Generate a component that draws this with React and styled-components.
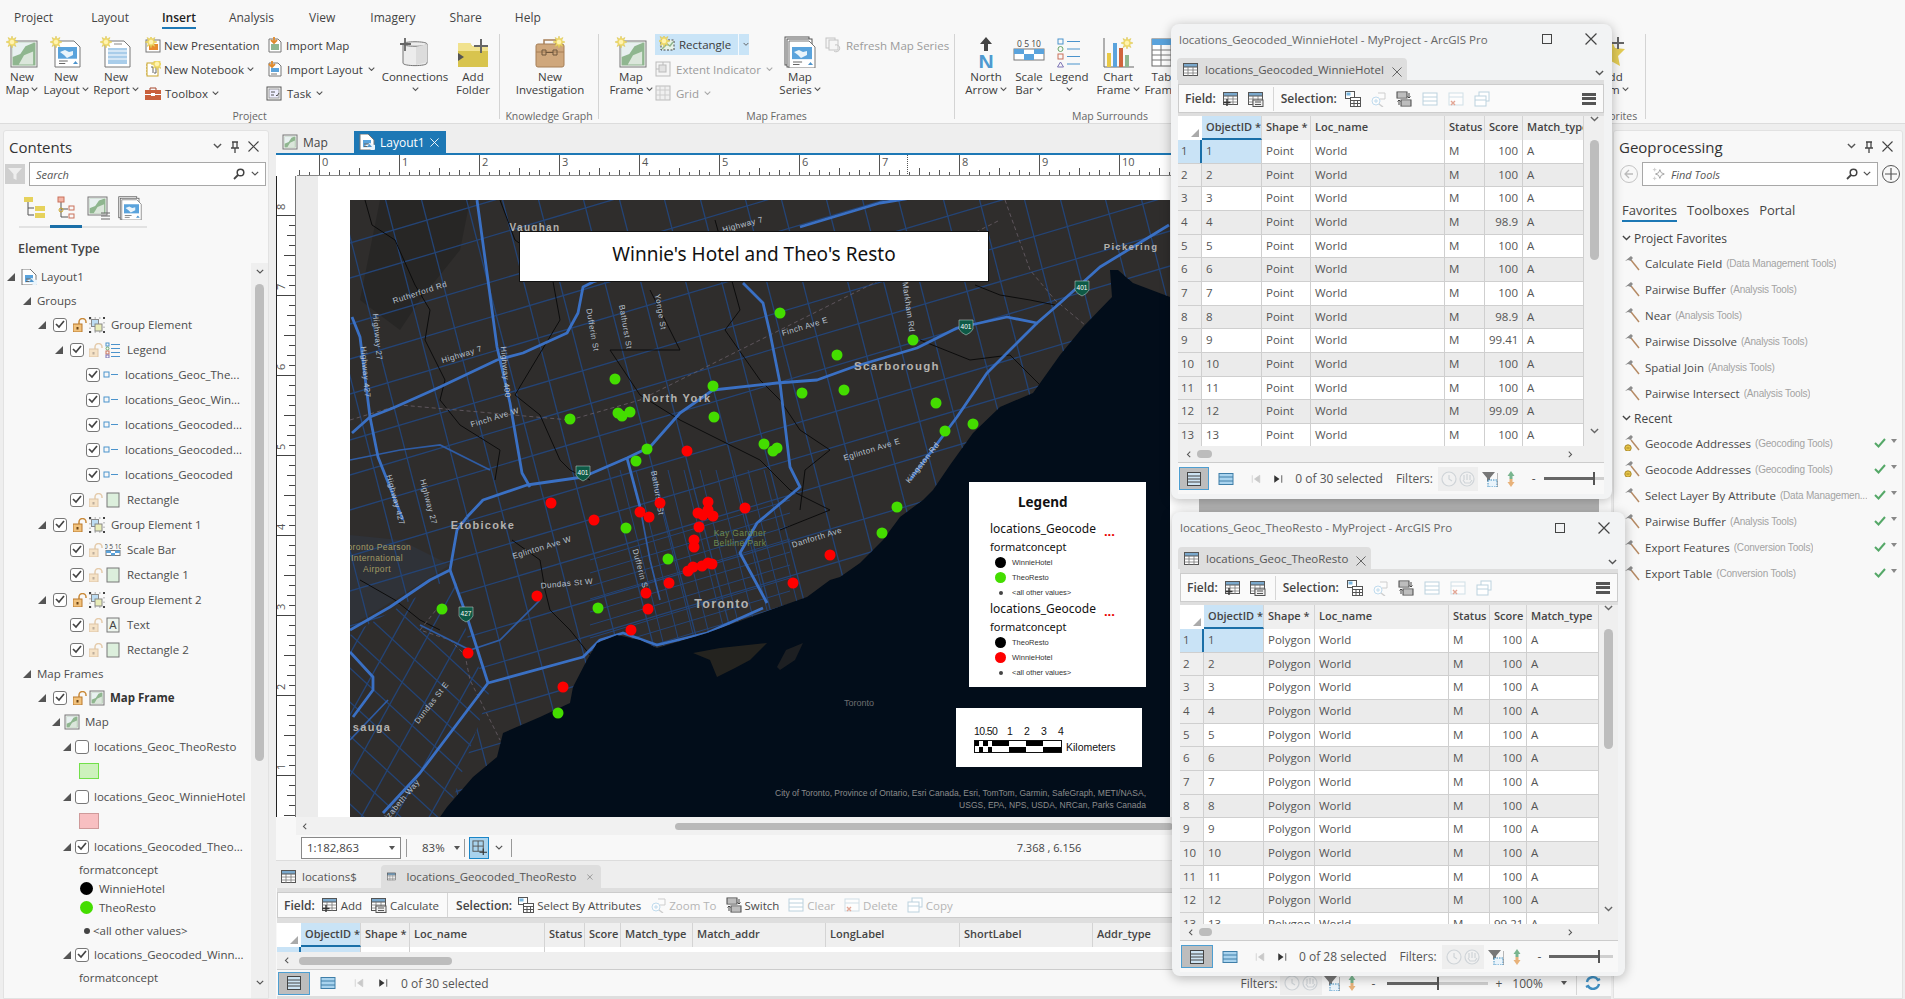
import React from "react";
import styled, { createGlobalStyle } from "styled-components";

const GlobalStyle = createGlobalStyle`
  html, body { margin: 0; padding: 0; background: #eeeeee; }
  * { box-sizing: border-box; }
  body { font-family: "Open Sans", "Noto Sans", sans-serif; color: #444; }
`;

/* ---------- small drawings ---------- */

const Chev = ({ s = 7, c = "#555" }) => (
  <svg width={s} height={s * 0.7} viewBox="0 0 10 7">
    <path d="M1 1l4 4 4-4" fill="none" stroke={c} strokeWidth="1.5" />
  </svg>
);

const Sun = ({ x = 0, y = 0 }) => (
  <g transform={`translate(${x} ${y})`}>
    <path d="M6 0l1 3 3-1.5L8.600 4.500 12 6 8.600 7.500 10 10.500 7 9 6 12 5 9 2 10.500 3.400 7.500 0 6l3.400-1.500L2 1.500 5 3z" fill="#f2dc6e" stroke="#d8c24a" strokeWidth=".5" />
    <circle cx="6" cy="6" r="2.200" fill="#fff3b0" />
  </g>
);

const MapArt = ({ x, y, w, h }) => (
  <g>
    <rect x={x} y={y} width={w} height={h} fill="#f5f5f5" stroke="#777" />
    <rect x={x + 1.5} y={y + 1.5} width={w - 3} height={h - 3} fill="#8fb68f" />
    <path d={`M${x + 1.5} ${y + h * 0.62}l${w * 0.3} ${-h * 0.12} ${w * 0.2} ${-h * 0.3} ${w * 0.3} ${-h * 0.12}V${y + 1.5}H${x + 1.5}z`} fill="#e8f0f0" />
    <path d={`M${x + w * 0.3} ${y + h * 0.9}l${w * 0.2} ${-h * 0.35} ${w * 0.35} ${-h * 0.15} 0 ${h * 0.5}z`} fill="#eef3ee" opacity=".8" />
  </g>
);

const PageArt = ({ x, y, w, h }) => (
  <g>
    <path d={`M${x} ${y}h${w - 6}l6 6v${h - 6}h${-w}z`} fill="#fff" stroke="#777" />
    <rect x={x + 3} y={y + 6} width={w - 6} height={h * 0.45} fill="#5aa3dc" />
    <path d={`M${x + 5} ${y + 11}l5-2 4 2 4-1 0 4-6 3-3-3z`} fill="#e9f4fb" />
    <path d={`M${x + 4} ${y + h - 6}h${w * 0.35}M${x + 4} ${y + h - 3.500}h${w * 0.25}`} stroke="#666" fill="none" />
    <path d={`M${x + w - 7} ${y + h - 3}l2.500-3 2.500 3z`} fill="#4b93cc" />
  </g>
);

const big = {
  newMap: (<><MapArt x={5} y={5} w={26} h={26} /><Sun x={0} y={0} /></>),
  newLayout: (<><PageArt x={5} y={5} w={25} h={26} /><Sun x={0} y={0} /></>),
  newReport: (
    <>
      <path d="M5 5h19l6 6v20H5z" fill="#fff" stroke="#777" />
      <rect x="8" y="12" width="19" height="16" fill="#a9cdea" />
      <path d="M8 15h19M8 19h19M8 23h19M14 8h8" stroke="#fff" strokeWidth="1.200" />
      <path d="M14 8h8" stroke="#888" />
      <Sun x={0} y={0} />
    </>
  ),
  connections: (
    <>
      <path d="M4 8c0-3 24-3 24 0v19c0 3.500-24 3.500-24 0z" fill="#ececec" stroke="#777" />
      <path d="M4 8c0 3 24 3 24 0" fill="none" stroke="#777" />
      <path d="M17 11v18l11-3V8z" fill="#dcdcdc" />
      <path d="M5 1v13M0 7h11" stroke="#666" strokeWidth="1.800" transform="translate(1 1)" />
    </>
  ),
  addFolder: (
    <>
      <path d="M1 7h12l2 3h16v21H1z" fill="#d8c44e" />
      <path d="M1 7h12l2 3h16v5H1z" fill="#f1e28e" />
      <path d="M1 17l6 4-6 4z" fill="#555" />
      <path d="M24 3v14M17 10h14" stroke="#666" strokeWidth="2" />
    </>
  ),
  investigation: (
    <>
      <rect x="2" y="8" width="28" height="23" rx="2" fill="#cfa77c" stroke="#a67f57" />
      <path d="M10 8V4h12v4" fill="none" stroke="#a67f57" strokeWidth="1.500" />
      <path d="M2 16h28" stroke="#a67f57" />
      <path d="M8 14v5h4v-5zM19 14v5h4v-5zM12 16.500h7" fill="none" stroke="#6f563c" />
      <Sun x={19} y={0} />
    </>
  ),
  mapSeries: (
    <>
      <rect x="1" y="1" width="24" height="28" fill="#fff" stroke="#555" />
      <rect x="3" y="3" width="25" height="28" fill="#fff" stroke="#555" />
      <PageArt x={5} y={5} w={26} h={27} />
    </>
  ),
  north: (
    <>
      <path d="M16 1l6 7h-4v7h-4V8h-4z" fill="#444" />
      <text x="16" y="33" textAnchor="middle" fontFamily="Liberation Sans" fontWeight="700" fontSize="21" fill="#4f9ad0">N</text>
    </>
  ),
  scale: (
    <>
      <text x="16" y="11" textAnchor="middle" fontFamily="Open Sans" fontSize="8.500" fill="#444">0 5 10</text>
      <rect x="1" y="13" width="30" height="11" fill="#fff" stroke="#777" />
      <path d="M1 13h10v5H1zM11 18h10v6H11zM21 13h10v5H21z" fill="#5aa3dc" />
    </>
  ),
  legend: (
    <>
      <rect x="5" y="3" width="5" height="5" fill="none" stroke="#4b93cc" />
      <circle cx="7.500" cy="13" r="2.500" fill="none" stroke="#6aa86a" />
      <rect x="5" y="18" width="5" height="5" fill="none" stroke="#c9705a" />
      <path d="M7.500 26l3 5h-6z" fill="none" stroke="#7d73b5" />
      <path d="M14 5.500h13M14 13h13M14 20.500h13M14 28h13" stroke="#4b93cc" strokeWidth="1.200" />
    </>
  ),
  chart: (
    <>
      <path d="M2 2v29h30" fill="none" stroke="#666" />
      <rect x="5" y="17" width="4" height="14" fill="#e9c945" />
      <rect x="11" y="7" width="4" height="24" fill="#5aa3dc" />
      <rect x="17" y="12" width="4" height="19" fill="#d0643c" />
      <rect x="23" y="19" width="4" height="12" fill="#8fb68f" />
      <Sun x={19} y={1} />
    </>
  ),
  table: (
    <>
      <rect x="2" y="3" width="28" height="27" fill="#fff" stroke="#666" />
      <rect x="2" y="3" width="28" height="6" fill="#5aa3dc" />
      <path d="M2 14h28M2 19h28M2 24h28M11 9v21M21 9v21" stroke="#777" />
    </>
  ),
  star: (
    <>
      <path d="M15 3l4 9 10 1-7 7 2 10-9-5-9 5 2-10-7-7 10-1z" fill="#e3cc55" />
      <path d="M22 1v12M16 7h12" stroke="#666" strokeWidth="2" />
    </>
  ),
};

const BigIcon = ({ name }) => (
  <svg width="32" height="32" viewBox="0 0 32 32">{big[name]}</svg>
);

const gridIcon = (
  <>
    <rect x=".5" y="1.500" width="14" height="12" fill="#fff" stroke="#555" />
    <rect x=".5" y="1.500" width="14" height="3.500" fill="#7aa8cc" stroke="#555" />
    <path d="M.5 8h14M.5 11h14M5 5v9M10 5v9" stroke="#777" strokeWidth=".8" />
  </>
);

const small = {
  presentation: (
    <>
      <rect x="1" y="3" width="14" height="12" fill="#fff" stroke="#777" />
      <rect x="4" y="7" width="9" height="6" fill="#e88a2c" />
      <Sun x={0} y={-1} />
    </>
  ),
  notebook: (
    <>
      <rect x="2" y="2" width="11" height="13" fill="#fff" stroke="#c9a52c" />
      <path d="M6 6h2v6M11 6v6h-2" fill="none" stroke="#666" />
      <path d="M2 4h-1M2 7h-1M2 10h-1M2 13h-1" stroke="#c9a52c" />
      <Sun x={6} y={-3} />
    </>
  ),
  toolbox: (
    <>
      <path d="M5 5V3h6v2" fill="none" stroke="#a6472c" />
      <rect x="0" y="5" width="16" height="10" fill="#c9603c" />
      <path d="M0 9.500h16" stroke="#fff" />
      <rect x="6" y="8" width="4" height="3" fill="#fff" />
    </>
  ),
  importMap: (
    <>
      <path d="M3 2h9l3 3v10H3z" fill="#fff" stroke="#777" />
      <rect x="5" y="7" width="8" height="6" fill="#8fb68f" />
      <path d="M8 0v5M5 3l3 3 3-3" fill="none" stroke="#e08a2c" strokeWidth="1.800" />
    </>
  ),
  importLayout: (
    <>
      <path d="M3 2h9l3 3v10H3z" fill="#fff" stroke="#777" />
      <rect x="5" y="7" width="8" height="4" fill="#5aa3dc" />
      <path d="M5 13h6" stroke="#777" />
      <path d="M6 0v5M3 3l3 3 3-3" fill="none" stroke="#e08a2c" strokeWidth="1.800" />
    </>
  ),
  task: (
    <>
      <rect x="1" y="2" width="14" height="13" fill="#fff" stroke="#555" />
      <rect x="3" y="4" width="10" height="9" fill="#eef" stroke="#999" />
      <path d="M5 7h4M5 10h3M10 10l1 1 2-3" fill="none" stroke="#555" />
    </>
  ),
  rectangle: (
    <>
      <rect x="2" y="4" width="13" height="10" fill="#e8f3e8" stroke="#444" strokeDasharray="2 1.500" />
      <path d="M3 13l5-5 3 2 3-4" fill="none" stroke="#8fb68f" strokeWidth="1.500" />
      <Sun x={-1} y={-1} />
    </>
  ),
  extent: (
    <>
      <rect x="1" y="1" width="14" height="14" fill="#f5f5f5" stroke="#bbb" />
      <rect x="4" y="4" width="7" height="7" fill="#e2e2e2" stroke="#bbb" />
      <path d="M1 8h3M8 1v3" stroke="#bbb" />
    </>
  ),
  grid: (
    <>
      <rect x="1" y="1" width="14" height="14" fill="#f0f0f0" stroke="#bbb" />
      <path d="M1 5h14M1 10h14M5 1v14M10 1v14" stroke="#ccc" />
    </>
  ),
  refresh: (
    <>
      <rect x="1" y="1" width="9" height="10" fill="#f5f5f5" stroke="#c4c4c4" />
      <rect x="4" y="3" width="9" height="10" fill="#f5f5f5" stroke="#c4c4c4" />
      <path d="M9 14a3.500 3.500 0 1 0 1-6" fill="none" stroke="#c4c4c4" />
    </>
  ),
  addField: (
    <>
      {gridIcon}
      <path d="M4 8v7M.5 11.500h7" stroke="#333" strokeWidth="1.400" />
    </>
  ),
  calcField: (
    <>
      {gridIcon}
      <rect x="5" y="9" width="10" height="6.500" fill="#eee" stroke="#555" />
      <path d="M7 11h6M7 13.500h6" stroke="#555" />
    </>
  ),
  selectAttr: (
    <>
      <rect x=".5" y=".5" width="9" height="7" fill="#fff" stroke="#555" />
      <rect x="1.500" y="1.500" width="4" height="3" fill="#7ab7e0" />
      <g transform="translate(5 6)" fill="#fff">
        <rect x=".5" y=".5" width="10" height="9" stroke="#555" />
        <path d="M.5 3.500h10M.5 6.500h10M4 3.500v6M7.500 3.500v6" stroke="#555" fill="none" />
      </g>
    </>
  ),
  zoomTo: (
    <g opacity=".45">
      <circle cx="6" cy="10" r="4" fill="#fff" stroke="#7ab7e0" />
      <path d="M4 10h4M6 8v4" stroke="#7ab7e0" />
      <path d="M8 2h7v6H10" fill="#fff" stroke="#999" />
      <path d="M9 13l4 3" stroke="#999" strokeWidth="1.400" />
    </g>
  ),
  swapSel: (
    <>
      <rect x="1" y="1" width="10" height="6" fill="#fff" stroke="#444" />
      <path d="M1 3h10M1 5h10" stroke="#444" strokeWidth=".7" />
      <rect x="5" y="9" width="10" height="6" fill="#fff" stroke="#444" />
      <path d="M5 11h10M5 13h10" stroke="#444" strokeWidth=".7" />
      <path d="M13 2v5M11.500 5.500L13 7l1.500-1.500M3 14V9M1.500 10.500L3 9l1.500 1.500" fill="none" stroke="#444" />
    </>
  ),
  clearSel: (
    <g stroke="#bcd2de" fill="#fff">
      <rect x="1" y="2" width="14" height="12" />
      <path d="M1 6h14M1 10h14" fill="none" />
    </g>
  ),
  deleteSel: (
    <g opacity=".65">
      <rect x="1" y="2" width="14" height="12" fill="#fff" stroke="#bcd2de" />
      <path d="M1 6h14" stroke="#bcd2de" />
      <path d="M3 10l4 4M7 10l-4 4" stroke="#d87a60" strokeWidth="1.400" />
    </g>
  ),
  copySel: (
    <g stroke="#bcd2de" fill="#fff">
      <rect x="5" y="1" width="10" height="9" />
      <rect x="1" y="5" width="11" height="10" />
      <path d="M1 9h11" fill="none" />
    </g>
  ),
  rowsAll: (
    <>
      <rect x="1.500" y="1.500" width="13" height="13" fill="#cde3f2" stroke="#444" />
      <path d="M1.500 5h13M1.500 8h13M1.500 11h13" stroke="#444" />
    </>
  ),
  rowsSel: (
    <>
      <rect x="1" y="2.500" width="14" height="11" fill="#a9d3ee" stroke="#3f7ea8" />
      <path d="M1 6h14M1 10h14" stroke="#3f7ea8" />
    </>
  ),
  first: (<path d="M3 3v10M13 3v10L6 8z" fill="#c9c9c9" stroke="#c9c9c9" />),
  last: (<><path d="M3 3l7 5-7 5z" fill="#333" /><path d="M13 3v10" stroke="#333" /></>),
  clock: (
    <g fill="none" stroke="#cfd4d8" strokeWidth="1.200">
      <circle cx="8" cy="8" r="7" fill="#f1f1f1" />
      <path d="M8 4v4l3 2" />
    </g>
  ),
  range: (
    <g fill="none" stroke="#cfd4d8" strokeWidth="1.200">
      <circle cx="8" cy="8" r="7" fill="#f1f1f1" />
      <path d="M5 4v5M8 3v6M11 4v5M4 9l2 3h5l2-3" />
    </g>
  ),
  funnel: (
    <>
      <path d="M0 1h13L8 7v5L5 10V7z" fill="#777" />
      <rect x="6" y="9" width="9" height="7" fill="#eaf4fb" stroke="#3f8fc2" strokeDasharray="1.500 1" />
      <path d="M16 2v14" stroke="#777" />
    </>
  ),
  upDown: (
    <>
      <path d="M8 0l3.500 5H9.500v3h-3V5H4.500z" fill="#79b58f" />
      <path d="M8 16l3.500-5H9.500V8h-3v3H4.500z" fill="#e8b27a" />
    </>
  ),
  refreshBig: (
    <g fill="none" stroke="#3f8fc2" strokeWidth="2.400">
      <path d="M2 7a6 6 0 0 1 11-2l2-1" />
      <path d="M14 9a6 6 0 0 1-11 2l-2 1" />
    </g>
  ),
  cellsPlus: (
    <>
      <rect x="1" y="1" width="11" height="11" fill="none" stroke="#555" />
      <path d="M1 6.500h11M6.500 1v11" stroke="#555" />
      <path d="M12 9v8M8 13h8" stroke="#333" strokeWidth="1.200" />
    </>
  ),
  layoutTree: (<PageArt x={1} y={0} w={14} h={16} />),
  mapTree: (<MapArt x={1} y={1} w={14} h={14} />),
  groupTree: (
    <>
      <rect x="1" y="1" width="14" height="14" fill="none" stroke="#999" strokeDasharray="1.500 3" />
      <rect x="2.500" y="2.500" width="7" height="7" fill="#bcdcf2" stroke="#888" />
      <rect x="6" y="7" width="7" height="7" fill="#e8ecb8" stroke="#888" />
      <path d="M0 0h2v2H0zM14 0h2v2h-2zM0 14h2v2H0zM14 14h2v2h-2z" fill="#444" />
    </>
  ),
  legendTree: (
    <>
      <rect x="1" y="1" width="3" height="3" fill="none" stroke="#4b93cc" />
      <circle cx="2.500" cy="6.500" r="1.500" fill="none" stroke="#6aa86a" />
      <rect x="1" y="9" width="3" height="3" fill="none" stroke="#c9705a" />
      <rect x="1" y="13" width="3" height="3" fill="none" stroke="#7d73b5" />
      <path d="M6 2.500h9M6 6.500h9M6 10.500h9M6 14.500h9" stroke="#4b93cc" />
    </>
  ),
  itemTree: (
    <>
      <rect x="1" y="5" width="5" height="5" fill="none" stroke="#4b93cc" />
      <path d="M8 7.500h7" stroke="#4b93cc" />
    </>
  ),
  rectTree: (<rect x="2" y="1" width="12" height="14" fill="#dcefdc" stroke="#777" />),
  scaleTree: (
    <>
      <text x="8" y="7" textAnchor="middle" fontFamily="Open Sans" fontSize="6.500" fill="#444">0 5 10</text>
      <rect x="1" y="8.500" width="14" height="5" fill="#fff" stroke="#777" />
      <path d="M1 8.500h5v2.500H1zM6 11h4v2.500H6zM10 8.500h5V11h-5z" fill="#5aa3dc" />
    </>
  ),
  textTree: (
    <>
      <rect x="2" y="1" width="12" height="14" fill="#eef5ee" stroke="#777" />
      <text x="8" y="12" textAnchor="middle" fontFamily="Liberation Sans" fontSize="11" fill="#444">A</text>
    </>
  ),
  hammer: (
    <>
      <path d="M7 5l8 10" stroke="#b58a64" strokeWidth="1.500" />
      <path d="M1 6l6-5 2 2-1 1-1 2-3-1z" fill="#8c8c8c" />
    </>
  ),
  geocode: (
    <>
      <path d="M7 5l8 10" stroke="#b58a64" strokeWidth="1.500" />
      <path d="M1 5l6-5 2 2-1 1-1 2-3-1z" fill="#8c8c8c" />
      <circle cx="4" cy="13" r="3.200" fill="#e6c447" stroke="#a9882a" />
      <path d="M2.500 13h3" stroke="#a9882a" />
    </>
  ),
  sparkle: (
    <>
      <path d="M9 3l1.500 3.500L14 8l-3.500 1.500L9 13 7.500 9.500 4 8l3.500-1.500z" fill="none" stroke="#999" />
      <path d="M3 1v4M1 3h4M3 11v4M1 13h4" stroke="#ccc" />
    </>
  ),
};

const SmallIcon = ({ name, s = 16 }) => (
  <svg width={s} height={s} viewBox="0 0 16 16" style={{ flex: "none" }}>
    {small[name]}
  </svg>
);

const Lock = ({ faded }) => (
  <svg width="14" height="14" viewBox="0 0 14 14" style={{ opacity: faded ? 0.4 : 1 }}>
    <path d="M6 7V4a3.500 3.500 0 0 1 7 0v1" fill="none" stroke="#c98a3a" strokeWidth="1.500" />
    <rect x="0" y="6" width="9" height="8" fill="#f1c27d" stroke="#b9792c" />
    <rect x="3.500" y="9" width="2" height="2.500" fill="#6b4418" />
  </svg>
);

const Mag = () => (
  <svg width="12" height="12" viewBox="0 0 12 12">
    <circle cx="7.500" cy="4.500" r="3.300" fill="none" stroke="#444" strokeWidth="1.500" />
    <path d="M5 7l-4 4" stroke="#444" strokeWidth="1.800" />
  </svg>
);

const Pin = () => (
  <svg width="10" height="12" viewBox="0 0 10 12">
    <path d="M2 1h6M3 1v6h4V1M1 7h8M5 7v5" fill="none" stroke="#444" strokeWidth="1.300" />
  </svg>
);

const Cross = ({ s = 11, c = "#444" }) => (
  <svg width={s} height={s} viewBox="0 0 11 11">
    <path d="M.5.500l10 10M10.500.500l-10 10" stroke={c} strokeWidth="1.100" />
  </svg>
);

const Tri = ({ c = "#555" }) => (
  <svg width="8" height="8" viewBox="0 0 8 8">
    <path d="M8 0v8H0z" fill={c} />
  </svg>
);

/* ---------- page shell ---------- */

const Page = styled.div`
  position: relative;
  width: 1905px;
  height: 999px;
  overflow: hidden;
  background: #eeeeee;
  font-size: 12px;
`;

const TabBar = styled.div`
  height: 34px;
  background: #f8f8f8;
  position: relative;
  display: flex;
  padding-top: 9px;
`;

const TopTab = styled.div`
  margin-left: ${(p) => p.$ml}px;
  height: 20px;
  line-height: 18px;
  font-size: 12px;
  color: ${(p) => (p.$active ? "#222" : "#444")};
  font-weight: ${(p) => (p.$active ? 600 : 400)};
  border-bottom: ${(p) => (p.$active ? "2px solid #1d78b5" : "2px solid transparent")};
`;

const Ribbon = styled.div`
  height: 90px;
  display: flex;
  background: #f8f8f8;
  border-bottom: 1px solid #dcdcdc;
`;

const RibbonGroup = styled.div`
  width: ${(p) => p.$w}px;
  height: 85px;
  display: flex;
  flex-direction: column;
  border-right: ${(p) => (p.$line ? "1px solid #d4d4d4" : "none")};
`;

const GroupBody = styled.div`
  flex: 1;
  display: flex;
  padding-left: ${(p) => p.$pl || 0}px;
`;

const GroupLabel = styled.div`
  height: 14px;
  margin-bottom: -4px;
  padding-left: ${(p) => p.$pl || 0}px;
  text-align: center;
  font-size: 10.500px;
  line-height: 14px;
  color: #666;
  white-space: nowrap;
`;

const BigBtn = styled.div`
  width: ${(p) => p.$w}px;
  flex: none;
  display: flex;
  flex-direction: column;
  align-items: center;
  height: 69px;
  overflow: visible;
`;

const BigArt = styled.div`
  height: 36px;
  display: flex;
  align-items: center;
  justify-content: center;
`;

const BigText = styled.div`
  font-size: 11.500px;
  line-height: 13px;
  text-align: center;
  color: #3c3c3c;
  white-space: nowrap;
  display: flex;
  align-items: center;
  justify-content: center;
  gap: 2px;
  height: 13px;
`;

const SmallCol = styled.div`
  width: ${(p) => p.$w}px;
  flex: none;
  padding-left: ${(p) => p.$pl || 0}px;
  margin-top: -1px;
  display: flex;
  flex-direction: column;
`;

const SmallBtn = styled.div`
  height: ${(p) => (p.$active ? 22 : 24)}px;
  margin-bottom: ${(p) => (p.$active ? 2 : 0)}px;
  margin-right: ${(p) => (p.$active ? 26 : 0)}px;
  display: flex;
  align-items: center;
  gap: ${(p) => p.$gap || 4}px;
  padding-left: ${(p) => p.$inset || 0}px;
  white-space: nowrap;
  font-size: 11.500px;
  color: ${(p) => (p.$off ? "#9b9b9b" : "#3c3c3c")};
  background: ${(p) => (p.$active ? "#c9e4f7" : "transparent")};
`;

const SplitLine = styled.span`
  width: 1px;
  height: 22px;
  background: #f4f9fd;
  margin-left: 3px;
`;

const BigButton = ({ w, icon, a, b, chev }) => (
  <BigBtn $w={w}>
    <BigArt>
      <BigIcon name={icon} />
    </BigArt>
    <BigText>{a}</BigText>
    <BigText>
      {b}
      {chev && <Chev s={7} />}
    </BigText>
  </BigBtn>
);

const SmallButton = ({ icon, label, chev, off, gap }) => (
  <SmallBtn $off={off} $gap={gap}>
    <SmallIcon name={icon} />
    <span>{label}</span>
    {chev && <Chev s={7} c={off ? "#aaa" : "#555"} />}
  </SmallBtn>
);

const TopRibbon = () => (
  <>
    <TabBar>
      <TopTab $ml={14}>Project</TopTab>
      <TopTab $ml={38}>Layout</TopTab>
      <TopTab $ml={33} $active>Insert</TopTab>
      <TopTab $ml={33}>Analysis</TopTab>
      <TopTab $ml={35}>View</TopTab>
      <TopTab $ml={35}>Imagery</TopTab>
      <TopTab $ml={34}>Share</TopTab>
      <TopTab $ml={33}>Help</TopTab>
    </TabBar>
    <Ribbon>
      <RibbonGroup $w={500} $line>
        <GroupBody>
          <BigButton w={44} icon="newMap" a="New" b="Map" chev />
          <BigButton w={44} icon="newLayout" a="New" b="Layout" chev />
          <BigButton w={56} icon="newReport" a="New" b="Report" chev />
          <SmallCol $w={120} $pl={1}>
            <SmallButton icon="presentation" label="New Presentation" gap={3} />
            <SmallButton icon="notebook" label="New Notebook" chev gap={3} />
            <SmallButton icon="toolbox" label="Toolbox" chev gap={4} />
          </SmallCol>
          <SmallCol $w={116} $pl={2}>
            <SmallButton icon="importMap" label="Import Map" />
            <SmallButton icon="importLayout" label="Import Layout" chev gap={5} />
            <SmallButton icon="task" label="Task" chev gap={5} />
          </SmallCol>
          <BigButton w={70} icon="connections" a="Connections" chev />
          <BigButton w={46} icon="addFolder" a="Add" b="Folder" />
        </GroupBody>
        <GroupLabel>Project</GroupLabel>
      </RibbonGroup>
      <RibbonGroup $w={99} $line>
        <GroupBody $pl={15}>
          <BigButton w={70} icon="investigation" a="New" b="Investigation" />
        </GroupBody>
        <GroupLabel>Knowledge Graph</GroupLabel>
      </RibbonGroup>
      <RibbonGroup $w={356} $line>
        <GroupBody $pl={9}>
          <BigButton w={46} icon="newMap" a="Map" b="Frame" chev />
          <SmallCol $w={121} $pl={1}>
            <SmallBtn $active $inset={4}>
              <SmallIcon name="rectangle" />
              <span>Rectangle</span>
              <SplitLine />
              <Chev s={7} />
            </SmallBtn>
            <SmallButton icon="extent" label="Extent Indicator" chev off gap={5} />
            <SmallButton icon="grid" label="Grid" chev off gap={5} />
          </SmallCol>
          <BigButton w={50} icon="mapSeries" a="Map" b="Series" chev />
          <SmallCol $w={125}>
            <SmallButton icon="refresh" label="Refresh Map Series" off gap={5} />
          </SmallCol>
        </GroupBody>
        <GroupLabel>Map Frames</GroupLabel>
      </RibbonGroup>
      <RibbonGroup $w={310}>
        <GroupBody $pl={5}>
          <BigButton w={52} icon="north" a="North" b="Arrow" chev />
          <BigButton w={34} icon="scale" a="Scale" b="Bar" chev />
          <BigButton w={46} icon="legend" a="Legend" chev />
          <BigButton w={52} icon="chart" a="Chart" b="Frame" chev />
          <BigButton w={44} icon="table" a="Table" b="Frame" chev />
        </GroupBody>
        <GroupLabel>Map Surrounds</GroupLabel>
      </RibbonGroup>
      <RibbonGroup $w={320} />
      <RibbonGroup $w={61} $line>
        <GroupBody $pl={2}>
          <BigButton w={50} icon="star" a="Add" b="Item" chev />
        </GroupBody>
        <GroupLabel>Favorites</GroupLabel>
      </RibbonGroup>
    </Ribbon>
  </>
);

/* ---------- contents pane ---------- */

const Workspace = styled.div`
  height: 875px;
  display: flex;
  padding-top: 6px;
`;

const SidePane = styled.div`
  width: ${(p) => p.$w}px;
  margin-left: ${(p) => p.$ml}px;
  flex: none;
  background: #f8f8f8;
  border: 1px solid #e2e2e2;
  border-radius: 3px 3px 0 0;
  display: flex;
  flex-direction: column;
  overflow: hidden;
`;

const PaneHead = styled.div`
  height: 31px;
  display: flex;
  align-items: center;
  padding: 0 6px 0 ${(p) => p.$pl}px;
  font-size: 15px;
  color: #333;
`;

const PaneTitle = styled.span`
  flex: 1;
`;

const PaneCtl = styled.span`
  display: inline-flex;
  width: ${(p) => p.$w || 18}px;
  justify-content: center;
`;

const SearchRow = styled.div`
  display: flex;
  align-items: center;
  height: 24px;
  padding: 0 2px 0 ${(p) => p.$pl || 1}px;
  gap: 4px;
`;

const FilterBtn = styled.div`
  width: 20px;
  height: 20px;
  background: #cfcfcf;
  display: flex;
  align-items: center;
  justify-content: center;
`;

const SearchBox = styled.div`
  flex: 1;
  height: 24px;
  background: #fff;
  border: 1px solid #a8a8a8;
  display: flex;
  align-items: center;
  padding: 0 6px;
  gap: 6px;
  font-style: italic;
  font-size: 11px;
  color: #555;
`;

const SearchText = styled.span`
  flex: 1;
`;

const ViewIcons = styled.div`
  margin: 9px 0 0 15px;
  width: 128px;
  height: 33px;
  border-bottom: 2px solid #e2e2e2;
  display: flex;
  position: relative;
`;

const ViewIcon = styled.div`
  margin-left: ${(p) => p.$ml}px;
  height: 33px;
  padding-top: 1px;
  width: ${(p) => p.$w}px;
  display: flex;
  justify-content: center;
  border-bottom: ${(p) => (p.$on ? "3px solid #1a6fa8" : "none")};
`;

const TypeHeading = styled.div`
  margin: 11px 0 4px 14px;
  height: 20px;
  line-height: 20px;
  font-size: 12.500px;
  font-weight: 600;
  color: #444;
`;

const TreeWrap = styled.div`
  flex: 1;
  display: flex;
  min-height: 0;
`;

const Tree = styled.div`
  flex: 1;
  min-width: 0;
  overflow: hidden;
  padding-top: 1px;
`;

const TreeRow = styled.div`
  display: flex;
  align-items: center;
  height: 25px;
  margin-bottom: ${(p) => p.$gap || 0}px;
  white-space: nowrap;
  font-size: 11.500px;
  color: ${(p) => (p.$bold ? "#333" : "#4c4c4c")};
  font-weight: ${(p) => (p.$bold ? 700 : 400)};
`;

const Slot = styled.span`
  flex: none;
  margin-left: ${(p) => p.$ml}px;
  width: ${(p) => p.$w}px;
  display: inline-flex;
  align-items: center;
  justify-content: center;
`;

const Check = styled.span`
  width: 14px;
  height: 14px;
  border: 1px solid #777;
  border-radius: 3px;
  background: #fff;
  display: inline-flex;
  align-items: center;
  justify-content: center;
`;

const Swatch = styled.span`
  width: 20px;
  height: 16px;
  background: ${(p) => p.$fill};
  border: 1.500px solid ${(p) => p.$line};
`;

const Dot = styled.span`
  width: ${(p) => p.$d}px;
  height: ${(p) => p.$d}px;
  border-radius: 50%;
  background: ${(p) => p.$fill};
`;

const TreeScroll = styled.div`
  width: 17px;
  flex: none;
  background: #efefef;
  position: relative;
  display: flex;
  flex-direction: column;
  align-items: center;
  padding-top: 6px;
`;

const ScrollThumb = styled.div`
  width: ${(p) => p.$w || 9}px;
  height: ${(p) => p.$h}px;
  background: #bdbdbd;
  border-radius: 5px;
  margin-top: ${(p) => p.$mt || 0}px;
`;

const ScrollDown = styled.div`
  margin-top: auto;
  padding-bottom: 8px;
`;

const Tick = () => (
  <svg width="10" height="9" viewBox="0 0 10 9">
    <path d="M1 4l3 3 5-6" fill="none" stroke="#444" strokeWidth="1.700" />
  </svg>
);

const treeRows = [
  { x: 8, arrow: 1, icon: "layoutTree", ix: 22, tx: 42, t: "Layout1", gap: -1 },
  { x: 24, arrow: 1, tx: 38, t: "Groups", gap: -1 },
  { x: 39, arrow: 1, cx: 54, lx: 74, icon: "groupTree", ix: 90, tx: 112, t: "Group Element" },
  { x: 56, arrow: 1, cx: 71, lx: 90, fade: 1, icon: "legendTree", ix: 106, tx: 128, t: "Legend" },
  { cx: 87, icon: "itemTree", ix: 104, tx: 126, t: "locations_Geoc_The..." },
  { cx: 87, icon: "itemTree", ix: 104, tx: 126, t: "locations_Geoc_Win..." },
  { cx: 87, icon: "itemTree", ix: 104, tx: 126, t: "locations_Geocoded..." },
  { cx: 87, icon: "itemTree", ix: 104, tx: 126, t: "locations_Geocoded..." },
  { cx: 87, icon: "itemTree", ix: 104, tx: 126, t: "locations_Geocoded" },
  { cx: 71, lx: 90, fade: 1, icon: "rectTree", ix: 106, tx: 128, t: "Rectangle" },
  { x: 39, arrow: 1, cx: 54, lx: 74, icon: "groupTree", ix: 90, tx: 112, t: "Group Element 1" },
  { cx: 71, lx: 90, fade: 1, icon: "scaleTree", ix: 106, tx: 128, t: "Scale Bar" },
  { cx: 71, lx: 90, fade: 1, icon: "rectTree", ix: 106, tx: 128, t: "Rectangle 1" },
  { x: 39, arrow: 1, cx: 54, lx: 74, icon: "groupTree", ix: 90, tx: 112, t: "Group Element 2" },
  { cx: 71, lx: 90, fade: 1, icon: "textTree", ix: 106, tx: 128, t: "Text" },
  { cx: 71, lx: 90, fade: 1, icon: "rectTree", ix: 106, tx: 128, t: "Rectangle 2", gap: -1 },
  { x: 24, arrow: 1, tx: 38, t: "Map Frames", gap: -1 },
  { x: 39, arrow: 1, cx: 54, lx: 74, icon: "mapTree", ix: 90, tx: 111, t: "Map Frame", bold: 1, gap: -1 },
  { x: 53, arrow: 1, icon: "mapTree", ix: 65, tx: 86, t: "Map" },
  { x: 64, arrow: 1, cx: 76, empty: 1, tx: 95, t: "locations_Geoc_TheoResto", gap: -1 },
  { swatch: ["#cdf2bd", "#72e04a"], gap: 1 },
  { x: 64, arrow: 1, cx: 76, empty: 1, tx: 95, t: "locations_Geoc_WinnieHotel", gap: -1 },
  { swatch: ["#f8bfc1", "#cf9a9a"], gap: 1 },
  { x: 64, arrow: 1, cx: 76, tx: 95, t: "locations_Geocoded_Theo...", gap: -2 },
  { tx: 80, t: "formatconcept", gap: -6 },
  { dot: ["#000", 13], tx: 100, t: "WinnieHotel", gap: -6 },
  { dot: ["#44dd00", 13], tx: 100, t: "TheoResto", gap: -2 },
  { dot: ["#444", 6], dotx: 81, tx: 94, t: "<all other values>", gap: -1 },
  { x: 64, arrow: 1, cx: 76, tx: 95, t: "locations_Geocoded_Winn...", gap: -2 },
  { tx: 80, t: "formatconcept" },
];

const TreeLine = ({ r }) => {
  // every row is a strip of parts, spaced from the tree's left edge
  const parts = [];
  let at = 0;
  const add = (x, w, node, key) => {
    parts.push(<Slot key={key} $ml={x - at} $w={w}>{node}</Slot>);
    at = x + w;
  };
  const origin = 5;
  if (r.arrow) add(r.x - origin, 8, <Tri />, "a");
  if (r.cx) add(r.cx - origin, 14, <Check>{r.empty ? null : <Tick />}</Check>, "c");
  if (r.lx) add(r.lx - origin, 14, <Lock faded={r.fade} />, "l");
  if (r.icon) add(r.ix - origin, 16, <SmallIcon name={r.icon} />, "i");
  if (r.swatch) add(80 - origin, 20, <Swatch $fill={r.swatch[0]} $line={r.swatch[1]} />, "s");
  if (r.dot) add((r.dotx || 81) - origin, 13, <Dot $fill={r.dot[0]} $d={r.dot[1]} />, "d");
  return (
    <TreeRow $bold={r.bold} $gap={r.gap}>
      {parts}
      {r.t && <Slot $ml={r.tx - origin - at}>{r.t}</Slot>}
    </TreeRow>
  );
};

const ContentsPane = () => (
  <SidePane $w={266} $ml={3}>
    <PaneHead $pl={5}>
      <PaneTitle>Contents</PaneTitle>
      <PaneCtl><Chev s={9} /></PaneCtl>
      <PaneCtl><Pin /></PaneCtl>
      <PaneCtl><Cross /></PaneCtl>
    </PaneHead>
    <SearchRow>
      <FilterBtn>
        <svg width="14" height="14" viewBox="0 0 14 14">
          <path d="M0 1h14L8.500 7v6l-3-1.500V7z" fill="#eee" />
        </svg>
      </FilterBtn>
      <SearchBox>
        <SearchText>Search</SearchText>
        <Mag />
        <Chev s={8} />
      </SearchBox>
    </SearchRow>
    <ViewIcons>
      <ViewIcon $ml={4} $w={24}>
        <svg width="24" height="24" viewBox="0 0 24 24">
          <path d="M5 6v13h6M5 12h6" fill="none" stroke="#555" />
          <rect x="1" y="1" width="9" height="5" fill="#e6d25c" />
          <rect x="12" y="10" width="10" height="5" fill="#e6d25c" />
          <rect x="12" y="17" width="10" height="5" fill="#e6d25c" />
        </svg>
      </ViewIcon>
      <ViewIcon $ml={3} $w={32} $on>
        <svg width="18" height="24" viewBox="0 0 18 24">
          <path d="M4 6v15h7M4 13h7" fill="none" stroke="#555" />
          <rect x="1" y="1" width="6" height="5" fill="#f3b6a8" stroke="#c9705a" />
          <rect x="12" y="10" width="5" height="4" fill="none" stroke="#c9705a" />
          <circle cx="4" cy="14" r="2" fill="none" stroke="#c9a52c" />
          <rect x="12" y="18" width="5" height="4" fill="none" stroke="#c9705a" />
        </svg>
      </ViewIcon>
      <ViewIcon $ml={5} $w={24}>
        <svg width="24" height="24" viewBox="0 0 24 24">
          <MapArt x={1} y={1} w={19} h={18} />
          <path d="M14 17h9M14 20h9M14 23h9" stroke="#666" />
        </svg>
      </ViewIcon>
      <ViewIcon $ml={7} $w={24}>
        <svg width="24" height="24" viewBox="0 0 32 32">{big.mapSeries}</svg>
      </ViewIcon>
    </ViewIcons>
    <TypeHeading>Element Type</TypeHeading>
    <TreeWrap>
      <Tree>
        {treeRows.map((r, i) => (
          <TreeLine key={i} r={r} />
        ))}
      </Tree>
      <TreeScroll>
        <Chev s={8} />
        <ScrollThumb $h={477} $mt={9} />
        <ScrollDown><Chev s={8} /></ScrollDown>
      </TreeScroll>
    </TreeWrap>
  </SidePane>
);

/* ---------- map drawing ---------- */

const land =
  "350,200 1170,200 1170,297 1133,283 1118,270 1110,270 1112,297 1083,327 1060,355 1033,393 1000,407 973,433 950,465 933,490 923,500 900,517 883,540 860,563 840,577 830,580 807,597 770,610 707,633 657,648 640,640 617,635 597,643 587,660 573,687 570,703 540,717 503,733 497,757 473,777 447,807 440,817 350,817";
const islands = "693,653 720,648 767,643 750,660 735,668 717,677 710,660";
const islet = "777,667 786,650 803,643 795,660 780,670";

const westZone = "350,635 455,575 470,650 490,690 447,817 350,817";
const eastZone = "350,200 1170,200 1170,560 800,817 447,817 490,690 470,650 455,575 350,635";

const range = (n) => Array.from({ length: n }, (_, i) => i);

const eastWest = range(22).map((i) => {
  const y = 205 + i * 39 + ((i * 7) % 11) - 5;
  return `M340 ${y}L1180 ${y - 250}`;
});
const northSouth = range(27).map((i) => {
  const x = 180 + i * 40 + ((i * 5) % 9) - 4;
  return `M${x} 190L${x + 165} 830`;
});
const downtown = [
  ...range(10).map((i) => {
    const y = 540 + i * 13;
    return `M590 ${y + 20}L790 ${y - 40}`;
  }),
  ...range(10).map((i) => {
    const x = 620 + i * 16;
    return `M${x} 470L${x + 45} 650`;
  }),
];
const westA = range(14).map((i) => `M${300 + i * 34} 560L${150 + i * 34} 830`);
const westB = range(14).map((i) => `M300 ${520 + i * 34}L560 ${760 + i * 34}`);

const highways = [
  "477,200 487,273 497,347 510,403 522,473 530,487",
  "352,433 370,417 393,408 440,387 497,360 523,353 567,333 578,313 583,287 593,282 625,272",
  "467,517 483,500 527,485 583,477 627,458 650,447 680,413 713,390 777,383 817,380 853,367 917,348 957,328 1007,317 1037,323 1060,303 1100,267 1169,225",
  "743,283 763,303 770,333 780,383 790,467 800,487 757,523 740,553 753,577 767,603",
  "352,317 360,337 370,417 378,457 403,520",
  "627,458 640,507",
  "450,570 467,617 488,683",
  "488,683 583,657 600,640 623,633 657,645 707,633 763,608",
  "488,683 420,773 383,813",
  "350,630 390,607 430,580 450,570 457,530 467,517",
  "350,652 373,677 373,690 353,717",
  "800,227 880,203 930,195",
  "1037,323 1013,347 987,373 957,417 910,480",
];

const creeks = [
  "365,200 372,225 395,240 415,285 430,310 425,340 445,380 440,400 460,425 500,450 495,480",
  "500,200 515,240 550,265 560,320 515,395 540,415 560,460 570,470 590,480",
  "650,290 680,350 610,350 640,395 680,420 700,430 760,460 790,490 830,510 780,530",
  "715,220 740,310 725,330 760,380 780,400 800,430 830,450 805,470 800,510",
  "512,540 540,560 545,590 550,610 570,630 590,655",
  "920,340 945,350 970,360 1010,355 1040,385",
  "975,285 1000,295 1030,300 1055,305",
  "360,580 395,600 420,620 440,630",
];

const borders = [
  "570,420 640,400 760,340 920,260 1000,220",
  "350,420 400,405 570,420",
  "440,605 420,630 450,640 465,655 470,680 490,720 500,740",
  "1005,200 1030,270 1055,300 1085,325",
];

const minorHighways = [
  "350,460 400,450 440,445 490,470",
  "640,507 650,560 660,600",
  "388,700 350,740",
  "420,625 470,650 500,640 540,600",
];

const greenDots = [
  [780, 313], [837, 355], [713, 386], [802, 393], [615, 379], [570, 419], [618, 413], [622, 416], [630, 412],
  [714, 417], [764, 444], [773, 451], [777, 448], [647, 449], [636, 461], [626, 528], [668, 559], [598, 608],
  [442, 609], [558, 713], [913, 340], [844, 390], [936, 403], [945, 431], [973, 424], [897, 507], [882, 533],
];

const redDots = [
  [687, 451], [551, 503], [594, 520], [640, 512], [649, 517], [660, 503], [708, 502], [698, 513], [708, 510],
  [713, 516], [703, 515], [745, 508], [699, 527], [694, 540], [694, 547], [688, 571], [693, 567], [702, 566],
  [708, 563], [712, 564], [669, 583], [646, 593], [648, 609], [631, 630], [537, 596], [468, 653], [563, 687],
  [830, 555], [793, 583],
];

const roadLabels = [
  ["Rutherford Rd", 420, 293, -18], ["Highway 27", 377, 337, 85], ["Highway 427", 365, 372, 85],
  ["Highway 7", 462, 355, -17], ["Highway 400", 505, 372, 85], ["Highway 7", 743, 225, -15],
  ["Dufferin St", 592, 330, 80], ["Bathurst St", 625, 327, 80], ["Yonge St", 660, 312, 80],
  ["Finch Ave E", 805, 327, -17], ["Finch Ave W", 495, 418, -17], ["Highway 427", 395, 500, 75],
  ["Highway 27", 428, 502, 75], ["Bathurst St", 657, 493, 80], ["Eglinton Ave W", 542, 548, -17],
  ["Dundas St W", 567, 584, -5], ["Dufferin St", 640, 570, 75], ["Danforth Ave", 817, 538, -17],
  ["Dundas St E", 432, 703, -52], ["Elizabeth Way", 400, 803, -50], ["Markham Rd", 908, 307, 82],
  ["Eglinton Ave E", 872, 450, -17], ["Kingston Rd", 923, 463, -52],
];

const placeLabels = [
  ["Vaughan", 535, 228, 10], ["North York", 677, 399, 11], ["Etobicoke", 483, 526, 11], ["Toronto", 722, 605, 12.500],
  ["sauga", 372, 728, 11], ["Scarborough", 897, 367, 11.500], ["Pickering", 1131, 247, 9.500],
];

const parkLabels = [
  ["Toronto Pearson", 377, 548, "#a39a63"], ["International", 377, 559, "#a39a63"], ["Airport", 377, 570, "#a39a63"],
  ["Kay Gardner", 740, 534, "#6f8a4e"], ["Beltline Park", 740, 544, "#6f8a4e"],
];

const Shield = ({ x, y, t }) => (
  <g transform={`translate(${x} ${y})`}>
    <path d="M-7-7h14v9q-2 4-7 6q-5-2-7-6z" fill="#0e5a46" stroke="#cfd8d4" strokeWidth=".5" />
    <text y="1.500" textAnchor="middle" fontSize="6.500" fontFamily="Liberation Sans" fill="#fff">{t}</text>
  </g>
);

const MapArtwork = () => (
  <svg width="820" height="617" viewBox="350 200 820 617" style={{ display: "block" }}>
    <defs>
      <clipPath id="landClip"><polygon points={land} /></clipPath>
      <clipPath id="westClip"><polygon points={westZone} /></clipPath>
      <clipPath id="eastClip"><polygon points={eastZone} /></clipPath>
    </defs>
    <rect x="350" y="200" width="820" height="617" fill="#020d1a" />
    <polygon points={land} fill="#2f2d2c" />
    <polygon points={islands} fill="#24231f" />
    <polygon points={islet} fill="#1d1f22" />
    <polygon points="380,200 470,200 460,250 420,300 400,330 360,300" fill="#272625" />
    <polygon points="350,535 400,540 450,565 370,615 350,625" fill="#2f3238" />
    <g clipPath="url(#landClip)">
      <g clipPath="url(#eastClip)" stroke="#244476" strokeWidth="1.300" fill="none">
        {eastWest.map((d, i) => <path key={i} d={d} />)}
        {northSouth.map((d, i) => <path key={i} d={d} />)}
        {downtown.map((d, i) => <path key={i} d={d} strokeWidth="1" />)}
      </g>
      <g clipPath="url(#westClip)" stroke="#244476" strokeWidth="1.300" fill="none">
        {westA.map((d, i) => <path key={i} d={d} />)}
        {westB.map((d, i) => <path key={i} d={d} />)}
      </g>
      {creeks.map((p, i) => <polyline key={i} points={p} fill="none" stroke="#0c0c0c" strokeWidth="1" />)}
      {borders.map((p, i) => <polyline key={i} points={p} fill="none" stroke="#6a5f68" strokeWidth=".8" strokeDasharray="4 3" />)}
      {minorHighways.map((p, i) => <polyline key={i} points={p} fill="none" stroke="#2f5ca4" strokeWidth="1.700" />)}
      {highways.map((p, i) => <polyline key={i} points={p} fill="none" stroke="#3a70c4" strokeWidth="2.800" strokeLinejoin="round" />)}
    </g>
    {roadLabels.map(([t, x, y, r], i) => (
      <text key={i} x={x} y={y} transform={`rotate(${r} ${x} ${y})`} textAnchor="middle" dominantBaseline="middle" fontFamily="Liberation Sans" fontSize="8" letterSpacing=".5" fill="#b9c2cf">{t}</text>
    ))}
    {placeLabels.map(([t, x, y, s], i) => (
      <text key={i} x={x} y={y} textAnchor="middle" dominantBaseline="middle" fontFamily="Liberation Sans" fontWeight="700" fontSize={s} letterSpacing="1.300" fill="#b4b2ae">{t}</text>
    ))}
    {parkLabels.map(([t, x, y, c], i) => (
      <text key={i} x={x} y={y} textAnchor="middle" dominantBaseline="middle" fontFamily="Liberation Sans" fontSize="8.500" letterSpacing=".4" fill={c}>{t}</text>
    ))}
    <text x="859" y="704" textAnchor="middle" dominantBaseline="middle" fontFamily="Liberation Sans" fontSize="9" fill="#6d6d70">Toronto</text>
    <Shield x={583} y={473} t="401" />
    <Shield x={466} y={614} t="427" />
    <Shield x={966} y={327} t="401" />
    <Shield x={1082} y={288} t="401" />
    {greenDots.map(([x, y], i) => <circle key={i} cx={x} cy={y} r="5.500" fill="#44dd00" />)}
    {redDots.map(([x, y], i) => <circle key={i} cx={x} cy={y} r="5.500" fill="#fe0000" />)}
  </svg>
);

/* ---------- map frame furniture ---------- */

const MapFrame = styled.div`
  position: relative;
  width: 820px;
  height: 617px;
  background: #020d1a;
  box-shadow: inset 0 1px 0 #222;
`;

const TitleBox = styled.div`
  position: absolute;
  left: 169px;
  top: 31px;
  width: 470px;
  height: 51px;
  padding-bottom: 6px;
  background: #fff;
  border: 1px solid #111;
  color: #111;
  font-family: "Noto Sans", sans-serif;
  font-size: 19px;
  display: flex;
  align-items: center;
  justify-content: center;
`;

const LegendBox = styled.div`
  position: absolute;
  left: 619px;
  top: 282px;
  width: 177px;
  height: 205px;
  background: #fff;
  color: #111;
  padding: 11px 0 0 21px;
  font-family: "Noto Sans", sans-serif;
`;

const LegendTitle = styled.div`
  font-weight: 700;
  font-size: 13.500px;
  line-height: 18px;
  margin: 0 0 9px 28px;
`;

const LegendLayer = styled.div`
  font-size: 12px;
  line-height: 18px;
  height: 18px;
  white-space: nowrap;
  display: flex;
`;

const RedDots = styled.span`
  color: #e80000;
  font-weight: 700;
  margin-left: 8px;
  font-size: 13px;
  line-height: 22px;
`;

const LegendField = styled.div`
  font-size: 11px;
  line-height: 17px;
  height: 17px;
`;

const LegendEntry = styled.div`
  display: flex;
  align-items: center;
  height: 15px;
  font-family: "Liberation Sans", sans-serif;
  font-size: 7.500px;
  color: #333;
`;

const EntryMark = styled.span`
  width: 22px;
  padding-left: 3px;
  display: flex;
  justify-content: center;
  padding-right: 4px;
`;

const ScaleBox = styled.div`
  position: absolute;
  left: 606px;
  top: 508px;
  width: 186px;
  height: 59px;
  background: #fff;
  color: #111;
  font-family: "Liberation Sans", sans-serif;
  font-size: 10.500px;
  padding: 17px 0 0 18px;
`;

const ScaleNums = styled.div`
  display: flex;
  height: 12px;
  line-height: 12px;
`;

const ScaleNum = styled.span`
  width: ${(p) => p.$w}px;
  letter-spacing: ${(p) => (p.$tight ? "-0.6px" : "0")};
`;

const ScaleRow = styled.div`
  display: flex;
  align-items: center;
  gap: 4px;
  margin-top: 3px;
`;

const Attribution = styled.div`
  position: absolute;
  right: 24px;
  top: 587px;
  text-align: right;
  font-family: "Liberation Sans", sans-serif;
  font-size: 8.500px;
  line-height: 12px;
  color: #8c8c8c;
  white-space: nowrap;
`;

const MapLegend = () => (
  <LegendBox>
    <LegendTitle>Legend</LegendTitle>
    <LegendLayer>locations_Geocode<RedDots>...</RedDots></LegendLayer>
    <LegendField>formatconcept</LegendField>
    <LegendEntry><EntryMark><Dot $fill="#000" $d={11} /></EntryMark>WinnieHotel</LegendEntry>
    <LegendEntry><EntryMark><Dot $fill="#44dd00" $d={11} /></EntryMark>TheoResto</LegendEntry>
    <LegendEntry><EntryMark><Dot $fill="#444" $d={4} /></EntryMark>{"<all other values>"}</LegendEntry>
    <LegendLayer>locations_Geocode<RedDots>...</RedDots></LegendLayer>
    <LegendField>formatconcept</LegendField>
    <LegendEntry><EntryMark><Dot $fill="#000" $d={11} /></EntryMark>TheoResto</LegendEntry>
    <LegendEntry><EntryMark><Dot $fill="#fe0000" $d={11} /></EntryMark>WinnieHotel</LegendEntry>
    <LegendEntry><EntryMark><Dot $fill="#444" $d={4} /></EntryMark>{"<all other values>"}</LegendEntry>
  </LegendBox>
);

const MapScale = () => (
  <ScaleBox>
    <ScaleNums>
      <ScaleNum $w={33} $tight>10.50</ScaleNum>
      <ScaleNum $w={17}>1</ScaleNum>
      <ScaleNum $w={17}>2</ScaleNum>
      <ScaleNum $w={17}>3</ScaleNum>
      <ScaleNum $w={10}>4</ScaleNum>
    </ScaleNums>
    <ScaleRow>
      <svg width="88" height="13" viewBox="0 0 88 13">
        <rect x=".5" y=".5" width="87" height="12" fill="#fff" stroke="#111" />
        <path d="M1 1h4v5H1zM5 7h4v5H5zM9 1h5v5H9zM14 7h4v5h-4zM18 1h17v5H18zM35 7h17v5H35zM52 1h17v5H52zM69 7h18v5H69z" fill="#000" />
      </svg>
      <span>Kilometers</span>
    </ScaleRow>
  </ScaleBox>
);

/* ---------- centre pane ---------- */

const CenterPane = styled.div`
  width: 1335px;
  margin-left: 7px;
  flex: none;
  display: flex;
  flex-direction: column;
  background: #f8f8f8;
`;

const ViewTabs = styled.div`
  height: 25px;
  display: flex;
  align-items: flex-end;
  padding-left: 1px;
  background: #eeeeee;
  border-bottom: 2px solid #1d78b5;
`;

const ViewTab = styled.div`
  height: 22px;
  display: flex;
  align-items: center;
  gap: 5px;
  padding: 0 5px;
  width: ${(p) => p.$w}px;
  background: ${(p) => (p.$on ? "#1d78b5" : "transparent")};
  color: ${(p) => (p.$on ? "#fff" : "#444")};
  font-size: 12px;
`;

const RulerTop = styled.div`
  height: 21px;
  background: #fff;
  padding-left: 21px;
`;

const CanvasRow = styled.div`
  height: 641px;
  display: flex;
  overflow: hidden;
`;

const CanvasGutter = styled.div`
  width: 22px;
  flex: none;
  background: #ececec;
`;

const PageSheet = styled.div`
  flex: 1;
  background: #fff;
  padding: 24px 0 0 32px;
`;

const CanvasScroll = styled.div`
  height: 18px;
  margin-left: 20px;
  background: #f1f1f1;
  display: flex;
  align-items: center;
  padding-left: 5px;
`;

const WideThumb = styled.div`
  margin-left: 367px;
  width: 498px;
  height: 7px;
  border-radius: 4px;
  background: #b9b9b9;
`;

const StatusLine = styled.div`
  height: 26px;
  border-bottom: 1px solid #dcdcdc;
  display: flex;
  align-items: center;
  padding-left: 25px;
  color: #444;
  font-size: 11.500px;
`;

const ScaleField = styled.div`
  width: 100px;
  height: 22px;
  background: #fff;
  border: 1px solid #888;
  display: flex;
  align-items: center;
  justify-content: space-between;
  padding: 0 5px;
`;

const StatusBreak = styled.span`
  width: 1px;
  height: 18px;
  background: #999;
  margin: 0 ${(p) => p.$m || 4}px;
`;

const Zoomed = styled.div`
  width: 48px;
  display: flex;
  align-items: center;
  gap: 9px;
  padding-left: 10px;
`;

const SnapBtn = styled.div`
  width: 20px;
  height: 22px;
  background: #a9d3ee;
  border: 1px solid #1a86c8;
  display: flex;
  align-items: center;
  justify-content: center;
`;

const SmallCaret = styled.span`
  width: 0;
  height: 0;
  border-left: 3px solid transparent;
  border-right: 3px solid transparent;
  border-top: 4px solid #555;
`;

const CursorXY = styled.div`
  margin-left: 479px;
  width: 100px;
  text-align: center;
  font-size: 11px;
`;

const DockTabs = styled.div`
  height: 27px;
  background: #eeeeee;
  display: flex;
  align-items: flex-end;
  padding-left: 3px;
`;

const DockTab = styled.div`
  height: 23px;
  padding: 0 8px 0 2px;
  width: ${(p) => p.$w}px;
  display: flex;
  align-items: center;
  gap: ${(p) => (p.$on ? 11 : 6)}px;
  background: ${(p) => (p.$on ? "#dedede" : "transparent")};
  border-radius: 4px 4px 0 0;
  padding-left: ${(p) => (p.$on ? 6 : 2)}px;
  color: #555;
  font-size: 11.500px;
`;

const DockLabel = styled.span`
  flex: 1;
  white-space: nowrap;
`;

const DockBody = styled.div`
  margin: 0 0 0 1px;
  flex: 1;
  background: #dedede;
  padding-top: 4px;
  display: flex;
  flex-direction: column;
`;

const Toolbar = styled.div`
  height: ${(p) => p.$h}px;
  flex: none;
  background: #fafafa;
  border: 1px solid #ccc;
  display: flex;
  align-items: center;
  padding-left: 6px;
  white-space: nowrap;
  font-size: 11.500px;
`;

const BarLabel = styled.b`
  font-weight: 600;
  color: #444;
  font-size: 12px;
  margin-left: ${(p) => p.$ml || 0}px;
`;

const BarBtn = styled.span`
  display: inline-flex;
  align-items: center;
  gap: 3px;
  margin-left: ${(p) => p.$ml}px;
  color: ${(p) => (p.$off ? "#b5b5b5" : "#4a4a4a")};
`;

const BarBreak = styled.span`
  width: 1px;
  height: 24px;
  background: #d6d6d6;
  margin-left: ${(p) => p.$ml}px;
`;

const BarBurger = styled.span`
  margin-left: auto;
  margin-right: 7px;
  width: 14px;
  height: 12px;
  border-top: 3px solid #555;
  border-bottom: 3px solid #555;
  position: relative;
  &::after {
    content: "";
    position: absolute;
    left: 0;
    right: 0;
    top: 1.500px;
    height: 3px;
    background: #555;
  }
`;

const HeadRow = styled.div`
  display: flex;
  height: 24px;
  flex: none;
  background: #efefef;
  margin-top: ${(p) => p.$mt || 0}px;
`;

const HeadCorner = styled.div`
  width: ${(p) => p.$w}px;
  flex: none;
  background: #fff;
  display: flex;
  align-items: flex-end;
  justify-content: flex-end;
  padding: 0 3px 3px 0;
`;

const HeadCell = styled.div`
  width: ${(p) => p.$w}px;
  flex: none;
  padding-left: 4px;
  font-size: 11px;
  font-weight: 600;
  line-height: 21px;
  color: #444;
  overflow: hidden;
  white-space: nowrap;
  border-right: 1px solid #d4d4d4;
  background: ${(p) => (p.$sel ? "#c9e3f6" : "transparent")};
  border-bottom: ${(p) => (p.$sel ? "2px solid #1a6fa8" : "none")};
`;

const BodyArea = styled.div`
  display: flex;
  height: ${(p) => p.$h}px;
  flex: none;
  overflow: hidden;
`;

const Rows = styled.div`
  width: ${(p) => p.$w}px;
  flex: none;
  overflow: hidden;
`;

const Row = styled.div`
  display: flex;
  height: 23.670px;
  background: ${(p) => (p.$alt ? "#ebebeb" : "#fff")};
  border-bottom: 1px solid #cfcfcf;
`;

const RowHead = styled.div`
  width: ${(p) => p.$w}px;
  flex: none;
  background: ${(p) => (p.$sel ? "#c9e3f6" : "#efefef")};
  border-right: ${(p) => (p.$sel ? "2px solid #1a6fa8" : "1px solid #cfcfcf")};
  padding-left: 3px;
  font-size: 11.500px;
  line-height: 22px;
  color: #555;
`;

const Cell = styled.div`
  width: ${(p) => p.$w}px;
  flex: none;
  padding: 0 4px;
  font-size: 11.500px;
  line-height: 22px;
  color: #555;
  overflow: hidden;
  white-space: nowrap;
  text-align: ${(p) => (p.$right ? "right" : "left")};
  border-right: 1px solid #cfcfcf;
  background: ${(p) => (p.$sel ? "#c9e3f6" : "transparent")};
`;

const VTrack = styled.div`
  flex: 1;
  background: #efefef;
  display: flex;
  flex-direction: column;
  align-items: center;
  padding-top: 0;
`;

const HTrack = styled.div`
  height: ${(p) => p.$h || 17}px;
  flex: none;
  background: #efefef;
  border-bottom: 1px solid #ccc;
  display: flex;
  align-items: center;
  padding-left: ${(p) => p.$pl || 6}px;
  gap: 5px;
`;

const HThumb = styled.div`
  width: ${(p) => p.$w}px;
  height: 8px;
  background: #bcbcbc;
  border-radius: 4px;
  margin-left: ${(p) => p.$ml || 0}px;
`;

const ChevSide = styled.span`
  transform: rotate(${(p) => (p.$right ? -90 : 90)}deg);
  display: inline-flex;
  margin-left: ${(p) => p.$ml || 0}px;
`;

const TableFoot = styled.div`
  height: ${(p) => p.$h}px;
  flex: none;
  background: #f8f8f8;
  display: flex;
  align-items: center;
  white-space: nowrap;
  font-size: 12px;
  color: #555;
  padding-left: 1px;
`;

const RowModeBtn = styled.div`
  width: 32px;
  height: 23px;
  background: ${(p) => (p.$on ? "#bdbdbd" : "transparent")};
  border: ${(p) => (p.$on ? "1px solid #4d9ed1" : "none")};
  display: flex;
  align-items: center;
  justify-content: center;
  margin-left: ${(p) => p.$ml || 0}px;
`;

const FootGap = styled.span`
  display: inline-flex;
  align-items: center;
  margin-left: ${(p) => p.$ml}px;
`;

const FilterChips = styled.span`
  display: inline-flex;
  align-items: center;
  justify-content: center;
  gap: 2px;
  width: 42px;
  height: 24px;
  background: #eeeeee;
  margin-left: ${(p) => p.$ml}px;
`;

const Slider = styled.span`
  position: relative;
  width: ${(p) => p.$w}px;
  margin-left: ${(p) => p.$ml}px;
  height: 3px;
  background: linear-gradient(to right, #666 0 ${(p) => p.$at}px, #cfcfcf ${(p) => p.$at}px);
  &::after {
    content: "";
    position: absolute;
    left: ${(p) => p.$at}px;
    top: -5px;
    width: 2px;
    height: 13px;
    background: #555;
  }
`;

const docColumns = [
  ["ObjectID *", 60, 1], ["Shape *", 49], ["Loc_name", 135], ["Status", 40], ["Score", 36],
  ["Match_type", 72], ["Match_addr", 133], ["LongLabel", 134], ["ShortLabel", 133], ["Addr_type", 80],
];

const DockedTable = () => (
  <>
    <DockTabs>
      <DockTab $w={102}>
        <svg width="15" height="15" viewBox="0 0 15 15">{gridIcon}</svg>
        <DockLabel>locations$</DockLabel>
      </DockTab>
      <DockTab $w={220} $on>
        <svg width="15" height="15" viewBox="0 0 15 15">{gridIcon}</svg>
        <DockLabel>locations_Geocoded_TheoResto</DockLabel>
        <Cross s={10} c="#666" />
      </DockTab>
    </DockTabs>
    <DockBody>
      <Toolbar $h={26}>
        <BarLabel>Field:</BarLabel>
        <BarBtn $ml={7}><SmallIcon name="addField" />Add</BarBtn>
        <BarBtn $ml={9}><SmallIcon name="calcField" />Calculate</BarBtn>
        <BarBreak $ml={8} />
        <BarLabel $ml={8}>Selection:</BarLabel>
        <BarBtn $ml={6}><SmallIcon name="selectAttr" />Select By Attributes</BarBtn>
        <BarBtn $ml={9} $off><SmallIcon name="zoomTo" />Zoom To</BarBtn>
        <BarBtn $ml={9}><SmallIcon name="swapSel" />Switch</BarBtn>
        <BarBtn $ml={9} $off><SmallIcon name="clearSel" />Clear</BarBtn>
        <BarBtn $ml={9} $off><SmallIcon name="deleteSel" />Delete</BarBtn>
        <BarBtn $ml={9} $off><SmallIcon name="copySel" />Copy</BarBtn>
      </Toolbar>
      <HeadRow $mt={5}>
        <HeadCorner $w={24}><Tri c="#aaa" /></HeadCorner>
        {docColumns.map(([t, w, sel]) => (
          <HeadCell key={t} $w={w} $sel={sel}>{t}</HeadCell>
        ))}
      </HeadRow>
      <BodyArea $h={5}>
        <Rows $w={900}>
          <Row>
            <RowHead $w={24} $sel />
            <Cell $w={60} $sel />
            <Cell $w={49} />
            <Cell $w={135} />
          </Row>
        </Rows>
      </BodyArea>
      <HTrack $h={18} $pl={6}>
        <ChevSide><Chev s={7} /></ChevSide>
        <HThumb $w={153} $ml={4} />
      </HTrack>
      <TableFoot $h={26}>
        <RowModeBtn $on><SmallIcon name="rowsAll" /></RowModeBtn>
        <FootGap $ml={2}><RowModeBtn><SmallIcon name="rowsSel" /></RowModeBtn></FootGap>
        <FootGap $ml={9}><SmallIcon name="first" s={12} /></FootGap>
        <FootGap $ml={12}><SmallIcon name="last" s={12} /></FootGap>
        <FootGap $ml={12}>0 of 30 selected</FootGap>
        <FootGap $ml={752}>Filters:</FootGap>
        <FilterChips $ml={2}>
          <SmallIcon name="clock" /><SmallIcon name="range" />
        </FilterChips>
        <FootGap $ml={2}><SmallIcon name="funnel" /></FootGap>
        <FootGap $ml={4}><SmallIcon name="upDown" /></FootGap>
        <FootGap $ml={12}>-</FootGap>
        <Slider $w={101} $ml={12} $at={50} />
        <FootGap $ml={7}>+</FootGap>
        <FootGap $ml={10}>100%</FootGap>
        <FootGap $ml={18}><SmallCaret /></FootGap>
        <BarBreak $ml={9} />
        <FootGap $ml={8}><SmallIcon name="refreshBig" /></FootGap>
      </TableFoot>
    </DockBody>
  </>
);

const HRuler = () => (
  <svg width="880" height="21" viewBox="297 0 880 21" style={{ display: "block" }}>
    {range(88).map((i) => {
      const x = 319 + i * 10 - 20;
      const major = (i - 2) % 8 === 0;
      const mid = (i - 2) % 4 === 0;
      return <path key={i} d={`M${x + 0.5} ${major ? 0 : mid ? 13 : i % 2 ? 17 : 15}V20`} stroke="#555" />;
    })}
    {range(11).map((n) => (
      <text key={n} x={319 + n * 80 + 3} y="11" fontFamily="Open Sans" fontSize="11" fill="#555">{n}</text>
    ))}
    <path d="M297 20.500H1177" stroke="#888" />
    <path d="M907.500 0V20" stroke="#555" strokeDasharray="1 1" />
  </svg>
);

const VRuler = () => (
  <svg width="20" height="641" viewBox="0 176 20 641" style={{ display: "block", flex: "none" }}>
    <rect x="0" y="176" width="20" height="641" fill="#fff" />
    {range(65).map((i) => {
      const y = 855 - i * 10;
      const major = i % 8 === 0;
      const mid = i % 4 === 0;
      return <path key={i} d={`M${major ? 0 : mid ? 8 : i % 2 ? 13 : 11} ${y + 0.5}H20`} stroke="#444" />;
    })}
    {range(9).map((n) => (
      <text key={n} x="9" y={855 - n * 80 - 5} transform={`rotate(-90 9 ${855 - n * 80 - 5})`} fontFamily="Open Sans" fontSize="11" fill="#555">{n}</text>
    ))}
    <path d="M.5 176V817" stroke="#222" />
    <path d="M19.500 176V817" stroke="#777" />
  </svg>
);

const Center = () => (
  <CenterPane>
    <ViewTabs>
      <ViewTab $w={77}>
        <SmallIcon name="mapTree" />
        <span>Map</span>
      </ViewTab>
      <ViewTab $w={92} $on>
        <svg width="16" height="16" viewBox="0 0 16 16">{small.layoutTree}</svg>
        <span>Layout1</span>
        <Cross s={9} c="#fff" />
      </ViewTab>
    </ViewTabs>
    <RulerTop><HRuler /></RulerTop>
    <CanvasRow>
      <VRuler />
      <CanvasGutter />
      <PageSheet>
        <MapFrame>
          <MapArtwork />
          <TitleBox>Winnie's Hotel and Theo's Resto</TitleBox>
          <MapLegend />
          <MapScale />
          <Attribution>
            City of Toronto, Province of Ontario, Esri Canada, Esri, TomTom, Garmin, SafeGraph, METI/NASA,
            <br />
            USGS, EPA, NPS, USDA, NRCan, Parks Canada
          </Attribution>
        </MapFrame>
      </PageSheet>
    </CanvasRow>
    <CanvasScroll>
      <ChevSide><Chev s={7} /></ChevSide>
      <WideThumb />
    </CanvasScroll>
    <StatusLine>
      <ScaleField>1:182,863<SmallCaret /></ScaleField>
      <StatusBreak $m={5} />
      <Zoomed>83%<SmallCaret /></Zoomed>
      <StatusBreak $m={4} />
      <SnapBtn><SmallIcon name="cellsPlus" s={15} /></SnapBtn>
      <FootGap $ml={6}><Chev s={8} /></FootGap>
      <StatusBreak $m={8} />
      <CursorXY>7.368 , 6.156</CursorXY>
    </StatusLine>
    <DockedTable />
  </CenterPane>
);

/* ---------- geoprocessing pane ---------- */

const BackCircle = styled.span`
  width: 18px;
  height: 18px;
  border-radius: 50%;
  border: 1px solid #c4c4c4;
  color: #bbb;
  flex: none;
  display: flex;
  align-items: center;
  justify-content: center;
`;

const GeoSearch = styled(SearchBox)`
  gap: 5px;
  padding-left: 9px;
  margin-left: 0;
`;

const PlusCircle = styled.span`
  width: 18px;
  height: 18px;
  border-radius: 50%;
  border: 1.200px solid #555;
  flex: none;
  display: flex;
  align-items: center;
  justify-content: center;
`;

const GeoTabs = styled.div`
  display: flex;
  gap: 10px;
  margin: 14px 0 0 8px;
  font-size: 13px;
  color: #444;
`;

const GeoTab = styled.div`
  height: 22px;
  line-height: 20px;
  border-bottom: ${(p) => (p.$on ? "2px solid #1d78b5" : "none")};
`;

const SectionHead = styled.div`
  display: flex;
  align-items: center;
  gap: 3px;
  height: 24px;
  padding-left: 8px;
  margin-top: ${(p) => p.$mt || 0}px;
  font-size: 12px;
  color: #444;
`;

const ToolRow = styled.div`
  display: flex;
  align-items: center;
  height: 26px;
  padding-left: 10px;
  white-space: nowrap;
  font-size: 11.500px;
  color: #4a4a4a;
`;

const ToolName = styled.span`
  margin-left: 5px;
`;

const ToolKind = styled.span`
  margin-left: 4px;
  font-family: "Liberation Sans", sans-serif;
  font-size: 10px;
  letter-spacing: -0.2px;
  color: #a3a3a3;
  flex: 0 1 auto;
  overflow: hidden;
`;

const ToolDone = styled.span`
  margin-left: auto;
  margin-right: 5px;
  display: inline-flex;
  align-items: center;
  gap: 5px;
`;

const Caret2 = styled(SmallCaret)`
  border-top-color: #888;
  margin-top: -5px;
`;

const favorites = [
  ["Calculate Field", "(Data Management Tools)"],
  ["Pairwise Buffer", "(Analysis Tools)"],
  ["Near", "(Analysis Tools)"],
  ["Pairwise Dissolve", "(Analysis Tools)"],
  ["Spatial Join", "(Analysis Tools)"],
  ["Pairwise Intersect", "(Analysis Tools)"],
];

const recent = [
  ["Geocode Addresses", "(Geocoding Tools)", "geocode"],
  ["Geocode Addresses", "(Geocoding Tools)", "geocode"],
  ["Select Layer By Attribute", "(Data Managemen...", "hammer"],
  ["Pairwise Buffer", "(Analysis Tools)", "hammer"],
  ["Export Features", "(Conversion Tools)", "hammer"],
  ["Export Table", "(Conversion Tools)", "hammer"],
];

const GeoPane = () => (
  <SidePane $w={290} $ml={2}>
    <PaneHead $pl={5}>
      <PaneTitle>Geoprocessing</PaneTitle>
      <PaneCtl><Chev s={9} /></PaneCtl>
      <PaneCtl><Pin /></PaneCtl>
      <PaneCtl><Cross /></PaneCtl>
    </PaneHead>
    <SearchRow $pl={6}>
      <BackCircle>
        <svg width="10" height="10" viewBox="0 0 10 10">
          <path d="M5 1L1 5l4 4M1 5h8" fill="none" stroke="#bbb" strokeWidth="1.300" />
        </svg>
      </BackCircle>
      <GeoSearch>
        <SmallIcon name="sparkle" s={14} />
        <SearchText>Find Tools</SearchText>
        <Mag />
        <Chev s={8} />
      </GeoSearch>
      <PlusCircle>
        <svg width="12" height="12" viewBox="0 0 12 12">
          <path d="M6 0v12M0 6h12" stroke="#555" strokeWidth="1.200" />
        </svg>
      </PlusCircle>
    </SearchRow>
    <GeoTabs>
      <GeoTab $on>Favorites</GeoTab>
      <GeoTab>Toolboxes</GeoTab>
      <GeoTab>Portal</GeoTab>
    </GeoTabs>
    <SectionHead $mt={4}><Chev s={9} c="#444" />Project Favorites</SectionHead>
    {favorites.map(([a, b]) => (
      <ToolRow key={a}>
        <SmallIcon name="hammer" />
        <ToolName>{a}</ToolName>
        <ToolKind>{b}</ToolKind>
      </ToolRow>
    ))}
    <SectionHead><Chev s={9} c="#444" />Recent</SectionHead>
    {recent.map(([a, b, ic], i) => (
      <ToolRow key={i}>
        <SmallIcon name={ic} />
        <ToolName>{a}</ToolName>
        <ToolKind>{b}</ToolKind>
        <ToolDone>
          <svg width="12" height="10" viewBox="0 0 12 10">
            <path d="M1 5l3.500 3.500L11 1" fill="none" stroke="#55a868" strokeWidth="2" />
          </svg>
          <Caret2 />
        </ToolDone>
      </ToolRow>
    ))}
  </SidePane>
);

/* ---------- floating table windows ---------- */

const Win = styled.div`
  position: absolute;
  left: ${(p) => p.$x}px;
  top: ${(p) => p.$y}px;
  width: ${(p) => p.$w}px;
  height: ${(p) => p.$h}px;
  background: #f2f3f4;
  border-radius: 8px;
  box-shadow: 0 2px 12px rgba(0, 0, 0, 0.28);
  display: flex;
  flex-direction: column;
  overflow: hidden;
`;

const WinTitle = styled.div`
  flex: none;
  height: ${(p) => p.$h}px;
  display: flex;
  align-items: center;
  padding: 0 15px 4px 8px;
  font-size: 11.500px;
  color: #666;
`;

const WinName = styled.span`
  flex: 1;
`;

const MaxBox = styled.span`
  width: 10px;
  height: 10px;
  border: 1px solid #444;
  margin-right: 33px;
`;

const WinTabs = styled.div`
  height: 22px;
  flex: none;
  display: flex;
  align-items: flex-end;
  padding: 0 8px 0 6px;
`;

const WinTab = styled.div`
  width: ${(p) => p.$w}px;
  height: 22px;
  background: #dedede;
  border-radius: 4px 4px 0 0;
  display: flex;
  align-items: center;
  gap: 7px;
  padding: 0 5px 0 6px;
  font-size: 11.500px;
  color: #555;
  white-space: nowrap;
`;

const TabSpace = styled.span`
  flex: 1;
  text-align: right;
  padding-top: 6px;
`;

const WinBody = styled.div`
  margin: 0 ${(p) => p.$mr}px 0 ${(p) => p.$ml}px;
  background: #dedede;
  padding-top: 4px;
  display: flex;
  flex-direction: column;
`;

const FootFill = styled.div`
  margin: 0 ${(p) => p.$mr}px 0 ${(p) => p.$ml}px;
`;

const headers = ["ObjectID *", "Shape *", "Loc_name", "Status", "Score", "Match_type"];

const TableWindow = ({ x, y, w, h, titleH, ml, mr, title, tab, tabW, cols, shape, scores, bodyH, thumb, foot, total, barGap }) => {
  const rowW = cols.reduce((a, b) => a + b, 0);
  return (
    <Win $x={x} $y={y} $w={w} $h={h}>
      <WinTitle $h={titleH}>
        <WinName>{title}</WinName>
        <MaxBox />
        <Cross s={12} />
      </WinTitle>
      <WinTabs>
        <WinTab $w={tabW}>
          <svg width="15" height="15" viewBox="0 0 15 15">{gridIcon}</svg>
          <span>{tab}</span>
          <TabSpace><Cross s={10} c="#666" /></TabSpace>
        </WinTab>
        <TabSpace><Chev s={9} /></TabSpace>
      </WinTabs>
      <WinBody $ml={ml} $mr={mr}>
        <Toolbar $h={29}>
          <BarLabel>Field:</BarLabel>
          <BarBtn $ml={7}><SmallIcon name="addField" /></BarBtn>
          <BarBtn $ml={9}><SmallIcon name="calcField" /></BarBtn>
          <BarBreak $ml={9} />
          <BarLabel $ml={7}>Selection:</BarLabel>
          <BarBtn $ml={8}><SmallIcon name="selectAttr" /></BarBtn>
          <BarBtn $ml={9}><SmallIcon name="zoomTo" /></BarBtn>
          <BarBtn $ml={10}><SmallIcon name="swapSel" /></BarBtn>
          <BarBtn $ml={10}><SmallIcon name="clearSel" /></BarBtn>
          <BarBtn $ml={10}><SmallIcon name="deleteSel" /></BarBtn>
          <BarBtn $ml={10}><SmallIcon name="copySel" /></BarBtn>
          <BarBurger />
        </Toolbar>
        <HeadRow $mt={3}>
          <HeadCorner $w={cols[0]}><Tri c="#aaa" /></HeadCorner>
          {headers.map((t, i) => (
            <HeadCell key={t} $w={cols[i + 1]} $sel={i === 0}>{t}</HeadCell>
          ))}
          <VTrack>
            <Chev s={9} c="#666" />
          </VTrack>
        </HeadRow>
        <BodyArea $h={bodyH}>
          <Rows $w={rowW}>
            {scores.map((s, i) => (
              <Row key={i} $alt={i % 2 === 1}>
                <RowHead $w={cols[0]} $sel={i === 0}>{i + 1}</RowHead>
                <Cell $w={cols[1]} $sel={i === 0}>{i + 1}</Cell>
                <Cell $w={cols[2]}>{shape}</Cell>
                <Cell $w={cols[3]}>World</Cell>
                <Cell $w={cols[4]}>M</Cell>
                <Cell $w={cols[5]} $right>{s}</Cell>
                <Cell $w={cols[6]}>A</Cell>
              </Row>
            ))}
          </Rows>
          <VTrack>
            <ScrollThumb $h={120} />
            <ScrollDown><Chev s={9} c="#666" /></ScrollDown>
          </VTrack>
        </BodyArea>
        <HTrack $pl={7}>
          <ChevSide><Chev s={7} /></ChevSide>
          <HThumb $w={thumb} />
          <ChevSide $right $ml={barGap}><Chev s={7} /></ChevSide>
        </HTrack>
      </WinBody>
      <FootFill $ml={ml} $mr={mr}>
        <TableFoot $h={foot}>
          <RowModeBtn $on><SmallIcon name="rowsAll" /></RowModeBtn>
          <FootGap $ml={9}><SmallIcon name="rowsSel" /></FootGap>
          <FootGap $ml={16}><SmallIcon name="first" s={12} /></FootGap>
          <FootGap $ml={10}><SmallIcon name="last" s={12} /></FootGap>
          <FootGap $ml={11}>{total}</FootGap>
          <FootGap $ml={13}>Filters:</FootGap>
          <FilterChips $ml={5}>
            <SmallIcon name="clock" /><SmallIcon name="range" />
          </FilterChips>
          <FootGap $ml={4}><SmallIcon name="funnel" /></FootGap>
          <FootGap $ml={5}><SmallIcon name="upDown" /></FootGap>
          <FootGap $ml={13}>-</FootGap>
          <Slider $w={64} $ml={8} $at={49} />
        </TableFoot>
      </FootFill>
    </Win>
  );
};

const GapStrip = styled.div`
  position: absolute;
  left: 1199px;
  top: 497px;
  width: 400px;
  height: 17px;
  background: #b6b6b6;
`;

const scoresA = [100, 100, 100, 98.9, 100, 100, 100, 98.9, 99.41, 100, 100, 99.09, 100];
const scoresB = [100, 100, 100, 100, 100, 100, 100, 100, 100, 100, 100, 100, 99.21];

export default function App() {
  return (
    <Page>
      <GlobalStyle />
      <TopRibbon />
      <Workspace>
        <ContentsPane />
        <Center />
        <GeoPane />
      </Workspace>
      <GapStrip />
      <TableWindow
        x={1171} y={24} w={441} h={475} titleH={34} ml={7} mr={8}
        title="locations_Geocoded_WinnieHotel - MyProject - ArcGIS Pro"
        tab="locations_Geocoded_WinnieHotel" tabW={230}
        cols={[24, 60, 49, 134, 40, 38, 61]} shape="Point" scores={scoresA}
        bodyH={306} thumb={15} foot={31} total="0 of 30 selected" barGap={350}
      />
      <TableWindow
        x={1172} y={512} w={453} h={464} titleH={35} ml={8} mr={7}
        title="locations_Geoc_TheoResto - MyProject - ArcGIS Pro"
        tab="locations_Geoc_TheoResto" tabW={193}
        cols={[24, 60, 51, 134, 41, 37, 72]} shape="Polygon" scores={scoresB}
        bodyH={295} thumb={13} foot={31} total="0 of 28 selected" barGap={350}
      />
    </Page>
  );
}
